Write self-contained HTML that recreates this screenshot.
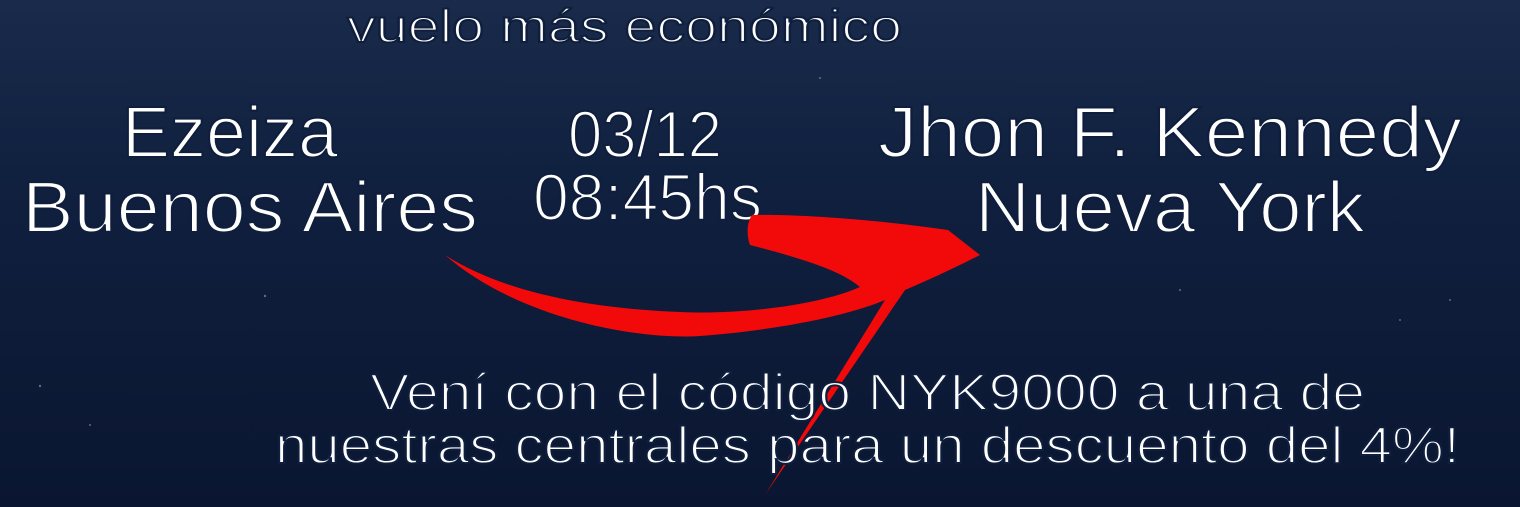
<!DOCTYPE html>
<html><head><meta charset="utf-8"><style>
html,body{margin:0;padding:0;width:1520px;height:507px;overflow:hidden;background:#0c1a36}
svg{display:block}
text{font-family:"Liberation Sans",sans-serif;fill:#fff;font-weight:normal;stroke:#0f1e3c;stroke-width:2px}
</style></head><body>
<svg width="1520" height="507" viewBox="0 0 1520 507">
<defs>
<linearGradient id="bg" x1="0" y1="0" x2="0" y2="1">
<stop offset="0" stop-color="#1a2a4a"/>
<stop offset="0.35" stop-color="#10203f"/>
<stop offset="1" stop-color="#0a1631"/>
</linearGradient>
</defs>
<rect width="1520" height="507" fill="url(#bg)"/>
<g fill="#8fa0c0" opacity="0.6">
<circle cx="265" cy="296" r="1.2"/><circle cx="40" cy="386" r="1.2"/><circle cx="90" cy="425" r="1"/><circle cx="1450" cy="300" r="1"/><circle cx="1180" cy="290" r="1"/><circle cx="820" cy="78" r="1"/><circle cx="1400" cy="320" r="1"/>
</g>
<text x="347" y="42" font-size="46" textLength="555" lengthAdjust="spacingAndGlyphs">vuelo  más  económico</text>
<text x="122" y="157" font-size="72" textLength="216" lengthAdjust="spacingAndGlyphs">Ezeiza</text>
<text x="22" y="232" font-size="72" textLength="456" lengthAdjust="spacingAndGlyphs">Buenos  Aires</text>
<text x="568" y="157" font-size="66" textLength="154" lengthAdjust="spacingAndGlyphs">03/12</text>
<text x="533" y="220" font-size="66" textLength="229" lengthAdjust="spacingAndGlyphs">08:45hs</text>
<text x="878" y="157" font-size="72" textLength="584" lengthAdjust="spacingAndGlyphs">Jhon  F.  Kennedy</text>
<text x="975" y="232" font-size="72" textLength="390" lengthAdjust="spacingAndGlyphs">Nueva  York</text>
<path d="M445,255 C520,320 640,340 700,336 C780,330 850,315 885,300 L765,495 L905,290 C940,275 960,265 980,255 L948,230 C880,220 800,214 752,215 C745,225 748,240 750,245 C800,258 840,270 860,287 C820,305 740,315 680,312 C580,308 500,290 445,255 Z" fill="#f20a0a"/>
<text x="370" y="410" font-size="52" textLength="995" lengthAdjust="spacingAndGlyphs">Vení  con  el  código  NYK9000  a  una  de</text>
<text x="275" y="463" font-size="52" textLength="1185" lengthAdjust="spacingAndGlyphs">nuestras  centrales  para  un  descuento  del  4%!</text>
</svg>
</body></html>
